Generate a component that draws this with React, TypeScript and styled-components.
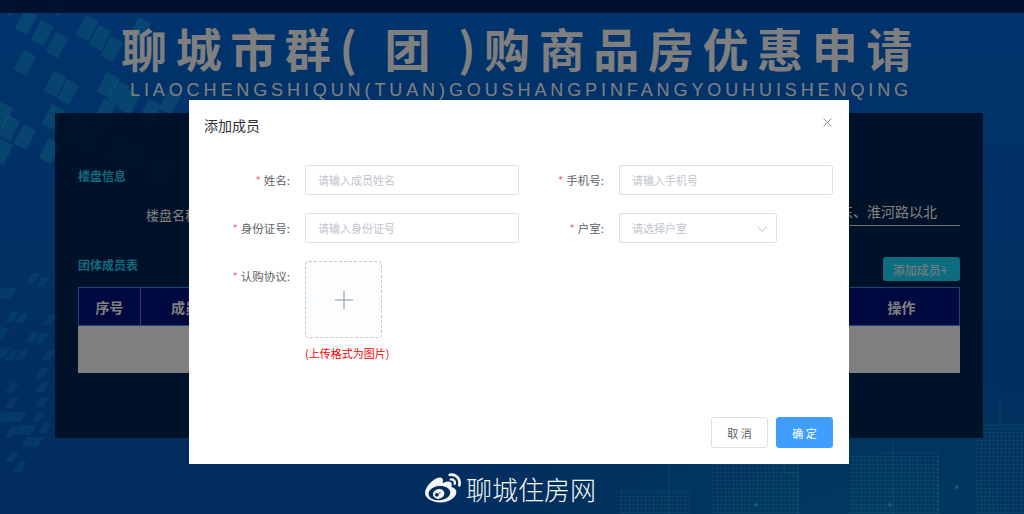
import React from 'react';
import styled, { createGlobalStyle } from 'styled-components';
import { FaWeibo } from 'react-icons/fa';

const CJK = '"Noto Sans CJK SC", "Liberation Sans", sans-serif';

const GlobalStyle = createGlobalStyle`
  html, body {
    margin: 0;
    padding: 0;
    background: #025ac8;
    font-family: ${CJK};
  }
  * { box-sizing: border-box; }
`;

const Page = styled.div`
  position: relative;
  width: 1024px;
  height: 514px;
  overflow: hidden;
  background:
    radial-gradient(ellipse 420px 160px at 860px 514px, #0474c0 0%, rgba(4, 116, 192, 0) 100%),
    linear-gradient(180deg, #0268dc 0%, #0260c4 55%, #025abc 100%);
`;

const Backdrop = styled.svg`
  position: absolute;
  inset: 0;
`;

const Content = styled.div`
  position: relative;
  display: flex;
  flex-direction: column;
`;

const TopBar = styled.div`
  height: 13px;
  background: rgba(0, 20, 70, 0.85);
`;

const Banner = styled.header`
  height: 100px;
  padding: 4px 0 0 18px;
  text-align: center;
`;

const BannerTitle = styled.h1`
  margin: 0;
  height: 63px;
  font-size: 46px;
  line-height: 60px;
  font-weight: 700;
  letter-spacing: 8.6px;
  white-space: nowrap;
  color: #fff;
`;

const BannerSub = styled.div`
  font-family: "Liberation Sans", sans-serif;
  font-size: 18px;
  line-height: 20px;
  letter-spacing: 3.9px;
  white-space: nowrap;
  color: #fff;
`;

const Panel = styled.section`
  width: 928px;
  height: 325px;
  margin-left: 55px;
  padding: 55px 23px 0;
  background: rgba(0, 28, 66, 0.88);
`;

const SectionTitle = styled.div`
  font-size: 12px;
  line-height: 16px;
  font-weight: 700;
  color: #1fd0f8;
`;

const InfoRow = styled.div`
  display: flex;
  justify-content: space-between;
  margin-top: 16px;
  padding-left: 68px;
  color: #fff;
`;

const InfoName = styled.span`
  margin-top: 4px;
  font-size: 13px;
  line-height: 22px;
`;

const InfoValue = styled.div`
  width: 300px;
  padding-right: 23px;
  border-bottom: 1px solid #f6e2c0;
  text-align: right;
  font-size: 14px;
  line-height: 22px;
`;

const MemberHead = styled.div`
  display: flex;
  justify-content: space-between;
  align-items: flex-start;
  margin-top: 31px;
  height: 24px;
`;

const AddButton = styled.button`
  width: 77px;
  height: 24px;
  padding: 0 3px 0 0;
  border: 0;
  border-radius: 3px;
  background: #1cd8ff;
  font-family: inherit;
  font-size: 12px;
  color: #fff;
`;

const MemberTable = styled.div`
  margin-top: 6px;
`;

const TableHead = styled.div`
  display: grid;
  grid-template-columns: 62px 1fr 115px;
  height: 39px;
  background: #001080;
  border: 1px solid #3a8cf0;
`;

const HeadCell = styled.div<{ $divided?: boolean }>`
  display: flex;
  align-items: center;
  justify-content: center;
  font-size: 14px;
  font-weight: 700;
  color: #fff;
  border-right: ${(p) => (p.$divided ? '1px solid #3a8cf0' : '0')};
`;

const NameCell = styled(HeadCell)`
  justify-content: flex-start;
  padding-left: 30px;
`;

const TableBody = styled.div`
  height: 47px;
  background: #fff;
`;

const Overlay = styled.div`
  position: absolute;
  inset: 0;
  padding-top: 100px;
  background: rgba(0, 0, 0, 0.5);
`;

const Dialog = styled.div`
  position: relative;
  display: flex;
  flex-direction: column;
  width: 660px;
  height: 364px;
  margin-left: 189px;
  background: #fff;
`;

const DialogHeader = styled.div`
  height: 65px;
  padding: 15px 15px 0;
`;

const DialogTitle = styled.div`
  font-size: 14px;
  line-height: 20px;
  color: #303133;
`;

const CloseButton = styled.svg`
  position: absolute;
  top: 18px;
  right: 17px;
  width: 9px;
  height: 9px;
  stroke: #909399;
  stroke-width: 1;
  fill: none;
`;

const Form = styled.div`
  flex: 1;
  display: grid;
  grid-template-columns: 314px 314px;
  grid-auto-rows: min-content;
  row-gap: 18px;
  padding-left: 16px;
`;

const Field = styled.div`
  display: flex;
  gap: 15px;
`;

const FieldLabel = styled.label`
  flex: none;
  width: 85px;
  text-align: right;
  font-size: 11.5px;
  line-height: 30px;
  color: #606266;
`;

const Required = styled.span`
  margin-right: 3px;
  color: #f56c6c;
`;

const TextBox = styled.div<{ $width?: number }>`
  position: relative;
  width: ${(p) => p.$width ?? 214}px;
  height: 30px;
  padding-left: 12px;
  border: 1px solid #dcdfe6;
  border-radius: 3px;
  font-size: 11px;
  line-height: 28px;
  color: #c0c4cc;
`;

const Chevron = styled.svg`
  position: absolute;
  top: 12px;
  right: 9px;
  width: 10px;
  height: 6px;
  stroke: #c0c4cc;
  stroke-width: 1;
  fill: none;
`;

const UploadBox = styled.div`
  display: flex;
  align-items: center;
  justify-content: center;
  width: 77px;
  height: 77px;
  border: 1px dashed #c0ccda;
  border-radius: 4px;
  background: #fbfdff;
`;

const PlusIcon = styled.svg`
  width: 18px;
  height: 18px;
  stroke: #8c939d;
  stroke-width: 1;
`;

const UploadTip = styled.div`
  margin-top: 6px;
  font-size: 11px;
  line-height: 18px;
  white-space: nowrap;
  color: #ff0000;
`;

const DialogFooter = styled.div`
  display: flex;
  justify-content: flex-end;
  gap: 8px;
  padding: 0 16px 16px;
`;

const FooterButton = styled.button<{ $primary?: boolean }>`
  width: 57px;
  height: 31px;
  padding: 0;
  border: 1px solid ${(p) => (p.$primary ? '#409eff' : '#dcdfe6')};
  border-radius: 3px;
  background: ${(p) => (p.$primary ? '#409eff' : '#fff')};
  font-family: inherit;
  font-size: 11px;
  color: ${(p) => (p.$primary ? '#fff' : '#606266')};
`;

const Watermark = styled.div`
  position: absolute;
  left: 425px;
  top: 471px;
  display: flex;
  align-items: center;
  gap: 5px;
  font-size: 26px;
  line-height: 36px;
  font-weight: 300;
  color: #f4f6f8;
`;

// rough positions of the slanted tiles in the background art, big ones up top
const bigTiles = [
  [26, 22], [42, 33], [57, 45], [87, 28], [100, 38], [112, 49], [25, 63], [55, 84], [68, 92],
  [108, 85], [118, 93], [129, 102], [9, 128], [25, 137], [50, 151], [53, 117], [140, 30],
  [105, 112], [150, 112], [170, 102], [10, 3], [58, 3], [2, 115], [2, 152], [75, 130],
  [88, 138], [120, 150], [135, 158], [160, 170],
];
const smallTiles = [
  [33, 278], [43, 282], [2, 293], [10, 293], [12, 317], [22, 318], [32, 338], [42, 338], [2, 333],
  [3, 353], [12, 355], [22, 355], [42, 373], [12, 388], [42, 387], [12, 403], [42, 402],
  [3, 417], [12, 417], [20, 417], [38, 417], [12, 432], [22, 430], [30, 430], [45, 428],
  [28, 442], [37, 442], [12, 457], [20, 467], [50, 320], [48, 355],
];
const pixelBlocks = [
  [712, 464, 88, 50], [850, 455, 90, 59], [975, 425, 49, 89], [620, 490, 70, 24],
];
const nodes = [[957, 487], [890, 505], [756, 505]];

const BackgroundArt: React.FC = () => (
  <Backdrop width={1024} height={514}>
    <defs>
      <pattern id="dots" width="4" height="4" patternUnits="userSpaceOnUse">
        <rect width="3" height="1" fill="#25c8e0" opacity="0.5" />
        <rect x="1" y="2" width="1" height="1" fill="#25c8e0" opacity="0.35" />
      </pattern>
    </defs>
    {bigTiles.map(([x, y], i) => (
      <rect key={i} x={x - 7} y={y - 11} width={14} height={22} fill="#1fb8f0" opacity={0.45}
        transform={`rotate(28 ${x} ${y})`} />
    ))}
    {smallTiles.map(([x, y], i) => (
      <rect key={i} x={x - 4} y={y - 5} width={8} height={10} fill="#1fa8e8" opacity={0.32}
        transform={`translate(${x} ${y}) skewX(-32) translate(${-x} ${-y})`} />
    ))}
    {pixelBlocks.map(([x, y, w, h], i) => (
      <rect key={i} x={x} y={y} width={w} height={h} fill="url(#dots)" />
    ))}
    {nodes.map(([x, y], i) => (
      <circle key={i} cx={x} cy={y} r={2} fill="#25d8f0" opacity={0.7} />
    ))}
    <path d="M669 464V514M784 464V473H798V514M893 440V514M875 453H938V514M1000 400V425M975 425H1024" stroke="#25c8e0" strokeOpacity="0.35" fill="none" />
  </Backdrop>
);

const Label: React.FC<{ text: string }> = ({ text }) => (
  <FieldLabel>
    <Required>*</Required>
    {text}:
  </FieldLabel>
);

export default function App() {
  return (
    <Page>
      <GlobalStyle />
      <BackgroundArt />
      <Content>
        <TopBar />
        <Banner>
          <BannerTitle>聊城市群(&nbsp;团&nbsp;)购商品房优惠申请</BannerTitle>
          <BannerSub>LIAOCHENGSHIQUN(TUAN)GOUSHANGPINFANGYOUHUISHENQING</BannerSub>
        </Banner>
        <Panel>
          <SectionTitle>楼盘信息</SectionTitle>
          <InfoRow>
            <InfoName>楼盘名称</InfoName>
            <InfoValue>东、淮河路以北</InfoValue>
          </InfoRow>
          <MemberHead>
            <SectionTitle>团体成员表</SectionTitle>
            <AddButton>添加成员+</AddButton>
          </MemberHead>
          <MemberTable>
            <TableHead>
              <HeadCell $divided>序号</HeadCell>
              <NameCell>成员姓名</NameCell>
              <HeadCell>操作</HeadCell>
            </TableHead>
            <TableBody />
          </MemberTable>
        </Panel>
      </Content>
      <Overlay>
        <Dialog>
          <DialogHeader>
            <DialogTitle>添加成员</DialogTitle>
            <CloseButton viewBox="0 0 9 9">
              <path d="M0.5 0.5L8.5 8.5M8.5 0.5L0.5 8.5" />
            </CloseButton>
          </DialogHeader>
          <Form>
            <Field>
              <Label text="姓名" />
              <TextBox>请输入成员姓名</TextBox>
            </Field>
            <Field>
              <Label text="手机号" />
              <TextBox>请输入手机号</TextBox>
            </Field>
            <Field>
              <Label text="身份证号" />
              <TextBox>请输入身份证号</TextBox>
            </Field>
            <Field>
              <Label text="户室" />
              <TextBox $width={158}>
                请选择户室
                <Chevron viewBox="0 0 10 6">
                  <path d="M0.5 0.5L5 5.5L9.5 0.5" />
                </Chevron>
              </TextBox>
            </Field>
            <Field>
              <Label text="认购协议" />
              <div>
                <UploadBox>
                  <PlusIcon viewBox="0 0 18 18">
                    <path d="M9 0V18M0 9H18" />
                  </PlusIcon>
                </UploadBox>
                <UploadTip>(上传格式为图片)</UploadTip>
              </div>
            </Field>
          </Form>
          <DialogFooter>
            <FooterButton>取 消</FooterButton>
            <FooterButton $primary>确 定</FooterButton>
          </DialogFooter>
        </Dialog>
      </Overlay>
      <Watermark>
        <FaWeibo size={36} />
        聊城住房网
      </Watermark>
    </Page>
  );
}
